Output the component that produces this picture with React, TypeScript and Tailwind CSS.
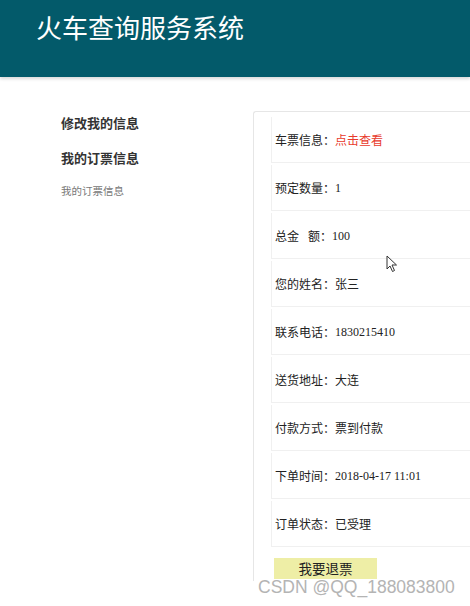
import React from "react";

const rows: { label: React.ReactNode; value: string; red?: boolean }[] = [
  { label: "车票信息：", value: "点击查看", red: true },
  { label: "预定数量：", value: "1" },
  {
    label: (
      <>
        总金<span className="inline-block w-[9px]" />额：
      </>
    ),
    value: "100",
  },
  { label: "您的姓名：", value: "张三" },
  { label: "联系电话：", value: "1830215410" },
  { label: "送货地址：", value: "大连" },
  { label: "付款方式：", value: "票到付款" },
  { label: "下单时间：", value: "2018-04-17 11:01" },
  { label: "订单状态：", value: "已受理" },
];

const cjk = { fontFamily: '"Noto Sans CJK SC", sans-serif' };

export default function App() {
  return (
    <div
      className="relative min-h-[606px] w-[470px] overflow-hidden bg-white"
      style={{ fontFamily: '"Liberation Serif", "Noto Sans CJK SC", serif' }}
    >
      {/* header */}
      <div className="h-[77px] bg-[#035a6a] pl-[36px] pt-[9px] shadow-[0_2px_3px_rgba(0,0,0,0.15)]">
        <h1 className="text-[26px] leading-[36px] text-white" style={cjk}>
          火车查询服务系统
        </h1>
      </div>

      <div className="flex">
        {/* sidebar */}
        <div className="w-[253px] shrink-0 pl-[61px] pt-[37px]" style={cjk}>
          <div className="text-[13px] font-bold leading-[18px] text-[#333]">修改我的信息</div>
          <div className="mt-[17px] text-[13px] font-bold leading-[18px] text-[#333]">我的订票信息</div>
          <div className="mt-[16px] text-[10.5px] leading-[16px] text-[#777]">我的订票信息</div>
        </div>

        {/* main panel */}
        <div className="mt-[34px] flex-1 rounded-tl-[3px] border-l border-t border-[#e6e6e6] pl-[17px] pt-[5px]">
          <div className="flex flex-col gap-[2px]">
            {rows.map((r, i) => (
              <div
                key={i}
                className="flex h-[46px] items-center border-b border-l border-[#f0f0f0] pl-[3px] text-[12px] text-[#222]"
              >
                <span style={cjk}>{r.label}</span>
                <span
                  className={r.red ? "text-[#e83a2c]" : ""}
                  style={r.red || /[\u4e00-\u9fff]/.test(r.value) ? cjk : undefined}
                >
                  {r.value}
                </span>
              </div>
            ))}
          </div>
          <button
            className="ml-[3px] mt-[11px] h-[21px] w-[103px] bg-[#eeeea6] text-[13.5px] leading-[21px] text-[#222]"
            style={cjk}
          >
            我要退票
          </button>
        </div>
      </div>

      {/* mouse cursor */}
      <svg className="absolute left-[386px] top-[255px]" width="12" height="18" viewBox="0 0 12 18">
        <path d="M1 1 L1 14 L4 11 L6.5 16.5 L8.5 15.5 L6 10 L10.5 10 Z" fill="white" stroke="#333" strokeWidth="1" strokeLinejoin="round" />
      </svg>

      {/* watermark */}
      <div
        className="pointer-events-none absolute left-[258px] top-[575px] text-[17.5px] leading-[24px] text-[#b4b4b4]"
        style={{ fontFamily: '"Liberation Sans", Arial, sans-serif' }}
      >
        CSDN @QQ_188083800
      </div>
    </div>
  );
}
